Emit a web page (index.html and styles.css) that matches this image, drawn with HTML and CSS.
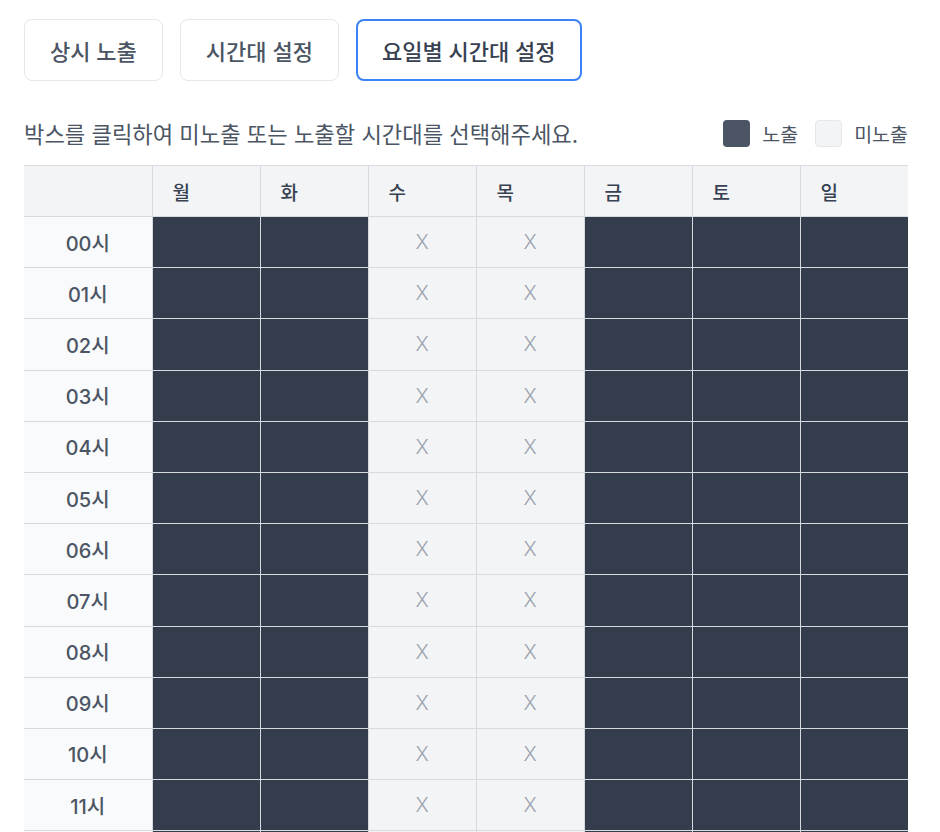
FILE: index.html
```html
<!DOCTYPE html>
<html lang="ko">
<head>
<meta charset="utf-8">
<title>요일별 시간대 설정</title>
<link rel="stylesheet" href="styles.css">
</head>
<body>
<div class="page">
  <div class="tabs">
    <button class="tab">상시 노출</button>
    <button class="tab">시간대 설정</button>
    <button class="tab active">요일별 시간대 설정</button>
  </div>
  <div class="info">
    <p class="hint">박스를 클릭하여 미노출 또는 노출할 시간대를 선택해주세요.</p>
    <div class="legend">
      <span class="swatch on"></span><span class="legend-label">노출</span>
      <span class="swatch off"></span><span class="legend-label">미노출</span>
    </div>
  </div>
  <table class="grid">
    <colgroup>
      <col class="col-hour"><col class="col-day"><col class="col-day"><col class="col-day"><col class="col-day"><col class="col-day"><col class="col-day"><col class="col-day">
    </colgroup>
    <thead>
      <tr><th class="corner"></th><th>월</th><th>화</th><th>수</th><th>목</th><th>금</th><th>토</th><th>일</th></tr>
    </thead>
    <tbody>
      <tr><td class="hour">00시</td><td class="on"></td><td class="on"></td><td class="off">X</td><td class="off">X</td><td class="on"></td><td class="on"></td><td class="on"></td></tr>
      <tr><td class="hour">01시</td><td class="on"></td><td class="on"></td><td class="off">X</td><td class="off">X</td><td class="on"></td><td class="on"></td><td class="on"></td></tr>
      <tr><td class="hour">02시</td><td class="on"></td><td class="on"></td><td class="off">X</td><td class="off">X</td><td class="on"></td><td class="on"></td><td class="on"></td></tr>
      <tr><td class="hour">03시</td><td class="on"></td><td class="on"></td><td class="off">X</td><td class="off">X</td><td class="on"></td><td class="on"></td><td class="on"></td></tr>
      <tr><td class="hour">04시</td><td class="on"></td><td class="on"></td><td class="off">X</td><td class="off">X</td><td class="on"></td><td class="on"></td><td class="on"></td></tr>
      <tr><td class="hour">05시</td><td class="on"></td><td class="on"></td><td class="off">X</td><td class="off">X</td><td class="on"></td><td class="on"></td><td class="on"></td></tr>
      <tr><td class="hour">06시</td><td class="on"></td><td class="on"></td><td class="off">X</td><td class="off">X</td><td class="on"></td><td class="on"></td><td class="on"></td></tr>
      <tr><td class="hour">07시</td><td class="on"></td><td class="on"></td><td class="off">X</td><td class="off">X</td><td class="on"></td><td class="on"></td><td class="on"></td></tr>
      <tr><td class="hour">08시</td><td class="on"></td><td class="on"></td><td class="off">X</td><td class="off">X</td><td class="on"></td><td class="on"></td><td class="on"></td></tr>
      <tr><td class="hour">09시</td><td class="on"></td><td class="on"></td><td class="off">X</td><td class="off">X</td><td class="on"></td><td class="on"></td><td class="on"></td></tr>
      <tr><td class="hour">10시</td><td class="on"></td><td class="on"></td><td class="off">X</td><td class="off">X</td><td class="on"></td><td class="on"></td><td class="on"></td></tr>
      <tr><td class="hour">11시</td><td class="on"></td><td class="on"></td><td class="off">X</td><td class="off">X</td><td class="on"></td><td class="on"></td><td class="on"></td></tr>
      <tr><td class="hour">12시</td><td class="on"></td><td class="on"></td><td class="off">X</td><td class="off">X</td><td class="on"></td><td class="on"></td><td class="on"></td></tr>
      <tr><td class="hour">13시</td><td class="on"></td><td class="on"></td><td class="off">X</td><td class="off">X</td><td class="on"></td><td class="on"></td><td class="on"></td></tr>
      <tr><td class="hour">14시</td><td class="on"></td><td class="on"></td><td class="off">X</td><td class="off">X</td><td class="on"></td><td class="on"></td><td class="on"></td></tr>
      <tr><td class="hour">15시</td><td class="on"></td><td class="on"></td><td class="off">X</td><td class="off">X</td><td class="on"></td><td class="on"></td><td class="on"></td></tr>
      <tr><td class="hour">16시</td><td class="on"></td><td class="on"></td><td class="off">X</td><td class="off">X</td><td class="on"></td><td class="on"></td><td class="on"></td></tr>
      <tr><td class="hour">17시</td><td class="on"></td><td class="on"></td><td class="off">X</td><td class="off">X</td><td class="on"></td><td class="on"></td><td class="on"></td></tr>
      <tr><td class="hour">18시</td><td class="on"></td><td class="on"></td><td class="off">X</td><td class="off">X</td><td class="on"></td><td class="on"></td><td class="on"></td></tr>
      <tr><td class="hour">19시</td><td class="on"></td><td class="on"></td><td class="off">X</td><td class="off">X</td><td class="on"></td><td class="on"></td><td class="on"></td></tr>
      <tr><td class="hour">20시</td><td class="on"></td><td class="on"></td><td class="off">X</td><td class="off">X</td><td class="on"></td><td class="on"></td><td class="on"></td></tr>
      <tr><td class="hour">21시</td><td class="on"></td><td class="on"></td><td class="off">X</td><td class="off">X</td><td class="on"></td><td class="on"></td><td class="on"></td></tr>
      <tr><td class="hour">22시</td><td class="on"></td><td class="on"></td><td class="off">X</td><td class="off">X</td><td class="on"></td><td class="on"></td><td class="on"></td></tr>
      <tr><td class="hour">23시</td><td class="on"></td><td class="on"></td><td class="off">X</td><td class="off">X</td><td class="on"></td><td class="on"></td><td class="on"></td></tr>
    </tbody>
  </table>
</div>
</body>
</html>
```
FILE: styles.css
```css
* { box-sizing: border-box; }
html, body { margin: 0; padding: 0; background: #ffffff; }
body {
  font-family: Inter, "Noto Sans CJK KR", sans-serif;
  color: #374151;
}
.page {
  padding: 19px 32px 0 24px;
}
.tabs {
  display: flex;
  gap: 17px;
}
.tab {
  height: 62px;
  padding: 0 25px;
  border: 1px solid #e5e7eb;
  border-radius: 8px;
  background: #ffffff;
  font-family: inherit;
  font-size: 22px;
  font-weight: 500;
  color: #4b5563;
  cursor: pointer;
}
.tab.active {
  border: 2px solid #3b82f6;
  padding: 0 24px;
  color: #374151;
}
.info {
  display: flex;
  align-items: center;
  justify-content: space-between;
  margin-top: 38px;
  height: 28px;
}
.hint {
  margin: 0;
  font-size: 22.2px;
  color: #4b5563;
}
.legend {
  display: flex;
  align-items: center;
}
.swatch {
  width: 27px;
  height: 27px;
  border-radius: 4px;
  margin-right: 12px;
}
.swatch.on { background: #4b5563; }
.swatch.off {
  background: #f3f4f6;
  border: 1px solid #e5e7eb;
  margin-left: 17px;
}
.legend-label {
  font-size: 19.5px;
  color: #4b5563;
}
.grid {
  margin-top: 18px;
  width: 884px;
  border-collapse: collapse;
  table-layout: fixed;
}
.col-hour { width: 128px; }
.col-day { width: 108px; }
.grid th {
  height: 51px;
  background: #f3f4f6;
  border-top: 1px solid #d7dbe0;
  border-bottom: 1px solid #d7dbe0;
  border-left: 1px solid #d7dbe0;
  text-align: left;
  padding: 0 0 0 20px;
  font-size: 19px;
  font-weight: 500;
  color: #374151;
}
.grid th.corner { border-left: none; }
.grid td {
  height: 51.2px;
  padding: 0;
  border-bottom: 1px solid #d7dbe0;
  border-left: 1px solid #d7dbe0;
  text-align: center;
}
.grid td.hour {
  border-left: none;
  background: #f9fafb;
  font-size: 20px;
  font-weight: 500;
  color: #4b5563;
}
.grid td.on { background: #333d4b; }
.grid td.off {
  background: #f3f4f6;
  color: #9ca3af;
  font-size: 20px;
  font-weight: 300;
}
```
